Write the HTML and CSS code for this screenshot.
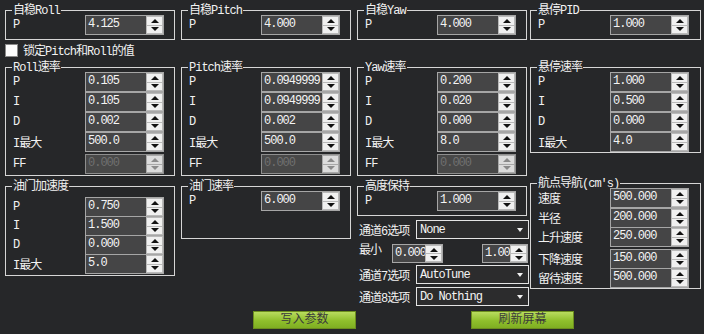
FILE: index.html
```html
<!DOCTYPE html>
<html lang="zh">
<head>
    <meta charset="UTF-8">
    <title>PID 调参</title>
    <link rel="stylesheet" href="styles.css">
</head>
<body>
    <div class="panel">
        <div class="col col1">
            <div class="group top">
                <div class="group-title">自稳Roll</div>
                <div class="row"><span class="lbl">P</span><div class="spin"><span class="val">4.125</span><span class="btns"><i class="up"></i><i class="dn"></i></span></div></div>
            </div>
            <label class="check"><span class="box"></span>锁定Pitch和Roll的值</label>
            <div class="group rate">
                <div class="group-title">Roll速率</div>
                <div class="row"><span class="lbl">P</span><div class="spin"><span class="val">0.105</span><span class="btns"><i class="up"></i><i class="dn"></i></span></div></div>
                <div class="row"><span class="lbl">I</span><div class="spin"><span class="val">0.105</span><span class="btns"><i class="up"></i><i class="dn"></i></span></div></div>
                <div class="row"><span class="lbl">D</span><div class="spin"><span class="val">0.002</span><span class="btns"><i class="up"></i><i class="dn"></i></span></div></div>
                <div class="row"><span class="lbl">I最大</span><div class="spin"><span class="val">500.0</span><span class="btns"><i class="up"></i><i class="dn"></i></span></div></div>
                <div class="row ff"><span class="lbl">FF</span><div class="spin off"><span class="val">0.000</span><span class="btns"><i class="up"></i><i class="dn"></i></span></div></div>
            </div>
            <div class="group throttle-acc">
                <div class="group-title">油门加速度</div>
                <div class="row"><span class="lbl">P</span><div class="spin"><span class="val">0.750</span><span class="btns"><i class="up"></i><i class="dn"></i></span></div></div>
                <div class="row tight"><span class="lbl">I</span><div class="spin"><span class="val">1.500</span><span class="btns"><i class="up"></i><i class="dn"></i></span></div></div>
                <div class="row tight"><span class="lbl">D</span><div class="spin"><span class="val">0.000</span><span class="btns"><i class="up"></i><i class="dn"></i></span></div></div>
                <div class="row tight"><span class="lbl">I最大</span><div class="spin"><span class="val">5.0</span><span class="btns"><i class="up"></i><i class="dn"></i></span></div></div>
            </div>
        </div>

        <div class="col col2">
            <div class="group top">
                <div class="group-title">自稳Pitch</div>
                <div class="row"><span class="lbl">P</span><div class="spin"><span class="val">4.000</span><span class="btns"><i class="up"></i><i class="dn"></i></span></div></div>
            </div>
            <div class="group rate skip">
                <div class="group-title">Pitch速率</div>
                <div class="row"><span class="lbl">P</span><div class="spin"><span class="val">0.0949999</span><span class="btns"><i class="up"></i><i class="dn"></i></span></div></div>
                <div class="row"><span class="lbl">I</span><div class="spin"><span class="val">0.0949999</span><span class="btns"><i class="up"></i><i class="dn"></i></span></div></div>
                <div class="row"><span class="lbl">D</span><div class="spin"><span class="val">0.002</span><span class="btns"><i class="up"></i><i class="dn"></i></span></div></div>
                <div class="row"><span class="lbl">I最大</span><div class="spin"><span class="val">500.0</span><span class="btns"><i class="up"></i><i class="dn"></i></span></div></div>
                <div class="row ff"><span class="lbl">FF</span><div class="spin off"><span class="val">0.000</span><span class="btns"><i class="up"></i><i class="dn"></i></span></div></div>
            </div>
            <div class="group throttle-rate">
                <div class="group-title">油门速率</div>
                <div class="row"><span class="lbl">P</span><div class="spin"><span class="val">6.000</span><span class="btns"><i class="up"></i><i class="dn"></i></span></div></div>
            </div>
        </div>

        <div class="col col3">
            <div class="group top">
                <div class="group-title">自稳Yaw</div>
                <div class="row"><span class="lbl">P</span><div class="spin"><span class="val">4.000</span><span class="btns"><i class="up"></i><i class="dn"></i></span></div></div>
            </div>
            <div class="group rate skip">
                <div class="group-title">Yaw速率</div>
                <div class="row"><span class="lbl">P</span><div class="spin"><span class="val">0.200</span><span class="btns"><i class="up"></i><i class="dn"></i></span></div></div>
                <div class="row"><span class="lbl">I</span><div class="spin"><span class="val">0.020</span><span class="btns"><i class="up"></i><i class="dn"></i></span></div></div>
                <div class="row"><span class="lbl">D</span><div class="spin"><span class="val">0.000</span><span class="btns"><i class="up"></i><i class="dn"></i></span></div></div>
                <div class="row"><span class="lbl">I最大</span><div class="spin"><span class="val">8.0</span><span class="btns"><i class="up"></i><i class="dn"></i></span></div></div>
                <div class="row ff"><span class="lbl">FF</span><div class="spin off"><span class="val">0.000</span><span class="btns"><i class="up"></i><i class="dn"></i></span></div></div>
            </div>
            <div class="group alt-hold">
                <div class="group-title">高度保持</div>
                <div class="row"><span class="lbl">P</span><div class="spin"><span class="val">1.000</span><span class="btns"><i class="up"></i><i class="dn"></i></span></div></div>
            </div>
            <div class="options">
                <div class="opt ch6"><span class="opt-lbl">通道6选项</span><div class="combo">None<i class="caret"></i></div></div>
                <div class="opt minmax">
                    <span class="min-lbl">最小</span>
                    <div class="spin small"><span class="val">0.000</span><span class="btns"><i class="up"></i><i class="dn"></i></span></div>
                    <div class="spin small max"><span class="val">1.00</span><span class="btns"><i class="up"></i><i class="dn"></i></span></div>
                </div>
                <div class="opt ch7"><span class="opt-lbl">通道7选项</span><div class="combo">AutoTune<i class="caret"></i></div></div>
                <div class="opt ch8"><span class="opt-lbl">通道8选项</span><div class="combo">Do Nothing<i class="caret"></i></div></div>
            </div>
        </div>

        <div class="col col4">
            <div class="group top">
                <div class="group-title">悬停PID</div>
                <div class="row"><span class="lbl">P</span><div class="spin"><span class="val">1.000</span><span class="btns"><i class="up"></i><i class="dn"></i></span></div></div>
            </div>
            <div class="group rate skip loiter">
                <div class="group-title">悬停速率</div>
                <div class="row"><span class="lbl">P</span><div class="spin"><span class="val">1.000</span><span class="btns"><i class="up"></i><i class="dn"></i></span></div></div>
                <div class="row"><span class="lbl">I</span><div class="spin"><span class="val">0.500</span><span class="btns"><i class="up"></i><i class="dn"></i></span></div></div>
                <div class="row"><span class="lbl">D</span><div class="spin"><span class="val">0.000</span><span class="btns"><i class="up"></i><i class="dn"></i></span></div></div>
                <div class="row"><span class="lbl">I最大</span><div class="spin"><span class="val">4.0</span><span class="btns"><i class="up"></i><i class="dn"></i></span></div></div>
            </div>
            <div class="group nav">
                <div class="group-title">航点导航(cm′s)</div>
                <div class="row"><span class="lbl">速度</span><div class="spin"><span class="val">500.000</span><span class="btns"><i class="up"></i><i class="dn"></i></span></div></div>
                <div class="row"><span class="lbl">半径</span><div class="spin"><span class="val">200.000</span><span class="btns"><i class="up"></i><i class="dn"></i></span></div></div>
                <div class="row tight"><span class="lbl">上升速度</span><div class="spin"><span class="val">250.000</span><span class="btns"><i class="up"></i><i class="dn"></i></span></div></div>
                <div class="row ff"><span class="lbl">下降速度</span><div class="spin"><span class="val">150.000</span><span class="btns"><i class="up"></i><i class="dn"></i></span></div></div>
                <div class="row tight"><span class="lbl">留待速度</span><div class="spin"><span class="val">500.000</span><span class="btns"><i class="up"></i><i class="dn"></i></span></div></div>
            </div>
        </div>
    </div>

    <div class="actions">
        <button class="btn">写入参数</button>
        <button class="btn">刷新屏幕</button>
    </div>
</body>
</html>
```

FILE: styles.css
```css
html, body {
    margin: 0;
    padding: 0;
}
body {
    width: 704px;
    height: 334px;
    overflow: hidden;
    background-color: #262729;
    color: #f2f2f2;
    font-family: "Liberation Mono", "Noto Sans CJK SC", monospace;
    font-size: 12px;
    letter-spacing: -1px;
}
.panel {
    display: flex;
    height: 308px;
    padding-left: 5px;
}
.col {
    display: flex;
    flex-direction: column;
    width: 170px;
}
.col2, .col3 {
    margin-left: 6px;
}
.col4 {
    margin-left: 3px;
    width: 171px;
}

/* group boxes */
.group {
    display: flex;
    flex-direction: column;
    border: 1px solid #d6d6d6;
    padding: 0 0 4px 7px;
}
.group-title {
    align-self: flex-start;
    height: 14px;
    line-height: 14px;
    margin: -7px 0 -3px -1px;
    padding: 0 1px;
    background-color: #262729;
    white-space: nowrap;
}
.top {
    margin-top: 10px;
}
.rate {
    margin-top: 10px;
    padding-bottom: 1px;
}
.skip {
    margin-top: 27px;
}
.loiter {
    padding-bottom: 0;
}
.throttle-acc {
    margin-top: 10px;
    padding-bottom: 1px;
}
.throttle-acc .group-title {
    margin-bottom: 3px;
}
.throttle-rate {
    margin-top: 10px;
    padding-bottom: 27px;
}
.alt-hold {
    margin-top: 10px;
}
.nav {
    margin-top: 30px;
    padding-bottom: 0;
}

/* rows */
.row {
    display: flex;
    align-items: center;
    height: 20px;
}
.row.tight {
    margin-top: -1px;
}
.row.ff {
    margin-top: 2px;
}
.lbl {
    width: 72px;
    white-space: nowrap;
}

/* spin boxes */
.spin {
    display: flex;
    box-sizing: border-box;
    width: 79px;
    height: 20px;
    border: 1px solid #a6a6a6;
    background-color: #454546;
}
.val {
    flex: 1;
    min-width: 0;
    overflow: hidden;
    white-space: nowrap;
    padding-left: 2px;
    line-height: 17px;
    color: #f4f4f4;
}
.btns {
    display: flex;
    flex-direction: column;
    gap: 1px;
    width: 17px;
    padding: 1px;
    box-sizing: border-box;
    background-color: #b9b9b9;
}
.btns i {
    flex: 1;
    display: flex;
    align-items: center;
    justify-content: center;
    background-color: #f0f0f0;
}
.btns i::after {
    content: "";
    width: 0;
    height: 0;
    border-left: 4px solid transparent;
    border-right: 4px solid transparent;
}
.up::after {
    border-bottom: 4px solid #111;
}
.dn::after {
    border-top: 4px solid #111;
}
.spin.off {
    border-color: #8e8e8e;
    background-color: #484848;
}
.spin.off .val {
    color: #707070;
}
.spin.off .btns {
    background-color: #a8a8a8;
}
.spin.off .btns i {
    background-color: #dcdcdc;
}
.spin.off .up::after {
    border-bottom-color: #8a8a8a;
}
.spin.off .dn::after {
    border-top-color: #8a8a8a;
}
.spin.small {
    width: 51px;
    height: 19px;
}
.spin.max {
    width: 46px;
    margin-left: 39px;
}
.spin.small .val {
    line-height: 16px;
}

/* checkbox */
.check {
    display: flex;
    align-items: center;
    height: 14px;
    margin-top: 3px;
    white-space: nowrap;
}
.check .box {
    box-sizing: border-box;
    width: 13px;
    height: 13px;
    margin-right: 5px;
    border: 1px solid #8a8a8a;
    background-color: #fdfdfd;
}

/* channel options */
.options {
    width: 172px;
    padding-left: 2px;
}
.opt {
    display: flex;
    align-items: center;
    height: 19px;
}
.opt-lbl {
    width: 57px;
    white-space: nowrap;
}
.ch6 {
    margin-top: 4px;
}
.minmax {
    margin-top: 5px;
}
.min-lbl {
    width: 33px;
    align-self: flex-start;
    line-height: 14px;
}
.ch7 {
    margin-top: 2px;
}
.ch8 {
    margin-top: 3px;
}
.combo {
    display: flex;
    align-items: center;
    box-sizing: border-box;
    width: 113px;
    height: 19px;
    padding-left: 3px;
    border: 1px solid #e4e4e4;
    background-color: #2c2c2d;
    color: #f4f4f4;
    white-space: nowrap;
}
.caret {
    margin-left: auto;
    margin-right: 5px;
    width: 0;
    height: 0;
    border-left: 3px solid transparent;
    border-right: 3px solid transparent;
    border-top: 4px solid #f0f0f0;
}

/* bottom buttons */
.actions {
    display: flex;
    gap: 115px;
    padding-left: 253px;
    margin-top: 3px;
}
.btn {
    width: 103px;
    height: 18px;
    padding: 0;
    border: 1px solid #6c8e1e;
    background: linear-gradient(#b9dc5f, #8fbf2c 55%, #7fae22);
    color: #3a3a3a;
    font-family: "Liberation Mono", "Noto Sans CJK SC", monospace;
    font-size: 12px;
    letter-spacing: 0;
    line-height: 16px;
    cursor: pointer;
}
```
